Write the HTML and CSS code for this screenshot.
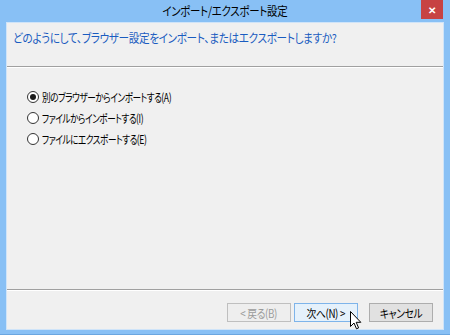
FILE: index.html
```html
<!DOCTYPE html>
<html lang="ja">
<head>
    <meta charset="UTF-8">
    <title>インポート/エクスポート設定</title>
    <link rel="stylesheet" href="styles.css">
</head>
<body>
<div class="window">
    <div class="titlebar">
        <span class="title">インポート/エクスポート設定</span>
        <span class="close">&#x2715;</span>
    </div>
    <div class="client">
        <div class="header"><span class="narrow">どのようにして、ブラウザー設定をインポート、またはエクスポートしますか?</span></div>
        <div class="options">
            <label class="option"><input type="radio" name="mode" checked><span class="narrow">別のブラウザーからインポートする(A)</span></label>
            <label class="option"><input type="radio" name="mode"><span class="narrow">ファイルからインポートする(I)</span></label>
            <label class="option"><input type="radio" name="mode"><span class="narrow">ファイルにエクスポートする(E)</span></label>
        </div>
        <div class="footer">
            <button class="btn disabled"><span class="label">&lt; 戻る(B)</span></button>
            <button class="btn hover"><span class="label">次へ(N) &gt;</span></button>
            <button class="btn cancel"><span class="label">キャンセル</span></button>
        </div>
    </div>
    <svg class="cursor" width="12" height="19" viewBox="0 0 12 19">
        <path d="M0.5 0.5 L0.5 15.5 L4 12 L6.5 17.8 L8.6 16.9 L6.2 11.3 L10.8 11.3 Z" fill="#fff" stroke="#000" stroke-width="1"/>
    </svg>
</div>
</body>
</html>
```

FILE: styles.css
```css
html, body {
    margin: 0;
    padding: 0;
}

body {
    font-family: "Noto Sans CJK JP", "Noto Sans", sans-serif;
    font-feature-settings: "palt";
    background-color: #88c0f5;
}

.window {
    position: relative;
    width: 450px;
    height: 335px;
    box-sizing: border-box;
    background-color: #88c0f5;
    border-bottom: 1px solid #6aa6e0;
    padding: 0 6px 4px;
    display: flex;
    flex-direction: column;
}

.titlebar {
    height: 22px;
    display: flex;
    align-items: center;
    justify-content: center;
    position: relative;
}

.title {
    display: inline-block;
    font-size: 12px;
    color: #000;
    letter-spacing: -0.3px;
    margin-top: -1px;
    transform: scaleX(0.87);
}

.close {
    position: absolute;
    right: 1px;
    top: 0;
    width: 22px;
    height: 19px;
    background-color: #c74343;
    color: #fff;
    font-size: 10px;
    font-weight: bold;
    display: flex;
    align-items: center;
    justify-content: center;
}

.client {
    flex: 1;
    background-color: #f0f0f0;
    border: 1px solid #cfe4f9;
    display: flex;
    flex-direction: column;
}

.narrow {
    display: inline-block;
    white-space: nowrap;
    transform-origin: left center;
}

.header {
    height: 44px;
    box-sizing: border-box;
    padding: 7px 0 0 6px;
    font-size: 12px;
    line-height: 16px;
    color: #1a5cc0;
    letter-spacing: -0.4px;
    border-bottom: 1px solid #a0a0a0;
    box-shadow: 0 1px 0 #ffffff;
}

.header .narrow {
    transform: scaleX(0.885);
}

.options {
    flex: 1;
    padding: 22px 0 0 20px;
    display: flex;
    flex-direction: column;
    gap: 5px;
}

.option {
    display: flex;
    align-items: center;
    height: 16px;
    font-size: 11.5px;
    color: #000;
    letter-spacing: -0.6px;
}

.option .narrow {
    transform: scaleX(0.75);
}

.option input {
    appearance: none;
    -webkit-appearance: none;
    width: 12px;
    height: 12px;
    margin: 0 3px 0 0;
    border: 1px solid #333;
    border-radius: 50%;
    background-color: #fff;
    box-sizing: border-box;
    position: relative;
}

.option input:checked::after {
    content: "";
    position: absolute;
    left: 2px;
    top: 2px;
    width: 6px;
    height: 6px;
    border-radius: 50%;
    background-color: #1a1a1a;
}

.footer {
    height: 40px;
    box-sizing: border-box;
    border-top: 1px solid #a0a0a0;
    box-shadow: inset 0 1px 0 #ffffff;
    display: flex;
    justify-content: flex-end;
    padding: 13px 10px 0 0;
}

.btn {
    width: 64px;
    height: 19px;
    box-sizing: border-box;
    font-family: "Noto Sans CJK JP", "Noto Sans", sans-serif;
    font-feature-settings: "palt";
    font-size: 11.5px;
    letter-spacing: -0.4px;
    padding: 0;
    border: 1px solid #adadad;
    background-color: #e1e1e1;
    color: #000;
    margin-left: 3px;
}

.btn .label {
    display: inline-block;
    white-space: nowrap;
    transform: scaleX(0.85);
}

.btn.disabled {
    border-color: #bfbfbf;
    background-color: #eeeeee;
    color: #9a9a9a;
}

.btn.hover {
    border-color: #7eb4ea;
    background-color: #e5f1fb;
}

.btn.cancel {
    margin-left: 11px;
}

.cursor {
    position: absolute;
    left: 350px;
    top: 311px;
}
```
